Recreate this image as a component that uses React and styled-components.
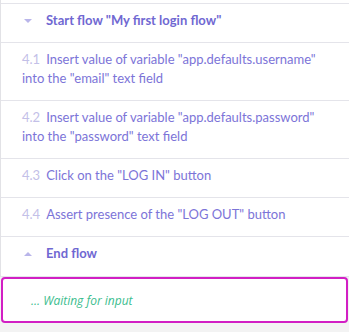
import React from "react";
import styled, { createGlobalStyle } from "styled-components";

const GlobalStyle = createGlobalStyle`
    body {
        margin: 0;
        background: #f3f3f3;
        font-family: Lato, "Liberation Sans", sans-serif;
    }
`;

const Panel = styled.div`
    background: #f3f3f3;
    height: 332px;
    overflow: hidden;
`;

const List = styled.div`
    background: #ffffff;
    border-left: 1px solid #e2e2e6;
    padding-top: 3px;
`;

const Row = styled.div`
    border-top: 1px solid #e4e4ea;
    padding: 7px 20px 12px 21px;
    font-size: 13px;
    line-height: 19px;
    color: #7c74d8;
`;

const FlowRow = styled.div`
    border-top: 1px solid #e4e4ea;
    border-bottom: ${(p) => (p.$last ? "1px solid #e4e4ea" : "none")};
    padding: 7px 0 ${(p) => (p.$last ? "13px" : "12px")} 23px;
    display: flex;
    align-items: center;
    gap: 14px;
    font-size: 13px;
    line-height: 19px;
    font-weight: 700;
    color: #7068d2;
`;

const Caret = styled.span`
    width: 0;
    height: 0;
    border-left: 4px solid transparent;
    border-right: 4px solid transparent;
    ${(p) =>
        p.$up
            ? "border-bottom: 4px solid #b9b5ea;"
            : "border-top: 4px solid #b9b5ea;"}
`;

const StepNo = styled.span`
    color: #c3c0e8;
    margin-right: 6px;
`;

const InputBox = styled.div`
    border: 2px solid #d21fc4;
    border-radius: 4px;
    background: #ffffff;
    height: 42px;
    margin: 0 1px;
    display: flex;
    align-items: center;
    padding-left: 28px;
    font-family: "Open Sans", sans-serif;
    font-size: 12px;
    font-style: italic;
    color: #3bbd8e;
`;

const steps = [
    { no: "4.1", text: 'Insert value of variable "app.defaults.username" into the "email" text field' },
    { no: "4.2", text: 'Insert value of variable "app.defaults.password" into the "password" text field' },
    { no: "4.3", text: 'Click on the "LOG IN" button' },
    { no: "4.4", text: 'Assert presence of the "LOG OUT" button' },
];

export default function App() {
    return (
        <Panel>
            <GlobalStyle />
            <List>
                <FlowRow>
                    <Caret />
                    <span>Start flow "My first login flow"</span>
                </FlowRow>
                {steps.map((s) => (
                    <Row key={s.no}>
                        <StepNo>{s.no}</StepNo>
                        {s.text}
                    </Row>
                ))}
                <FlowRow $last>
                    <Caret $up />
                    <span>End flow</span>
                </FlowRow>
            </List>
            <InputBox>... Waiting for input</InputBox>
        </Panel>
    );
}
